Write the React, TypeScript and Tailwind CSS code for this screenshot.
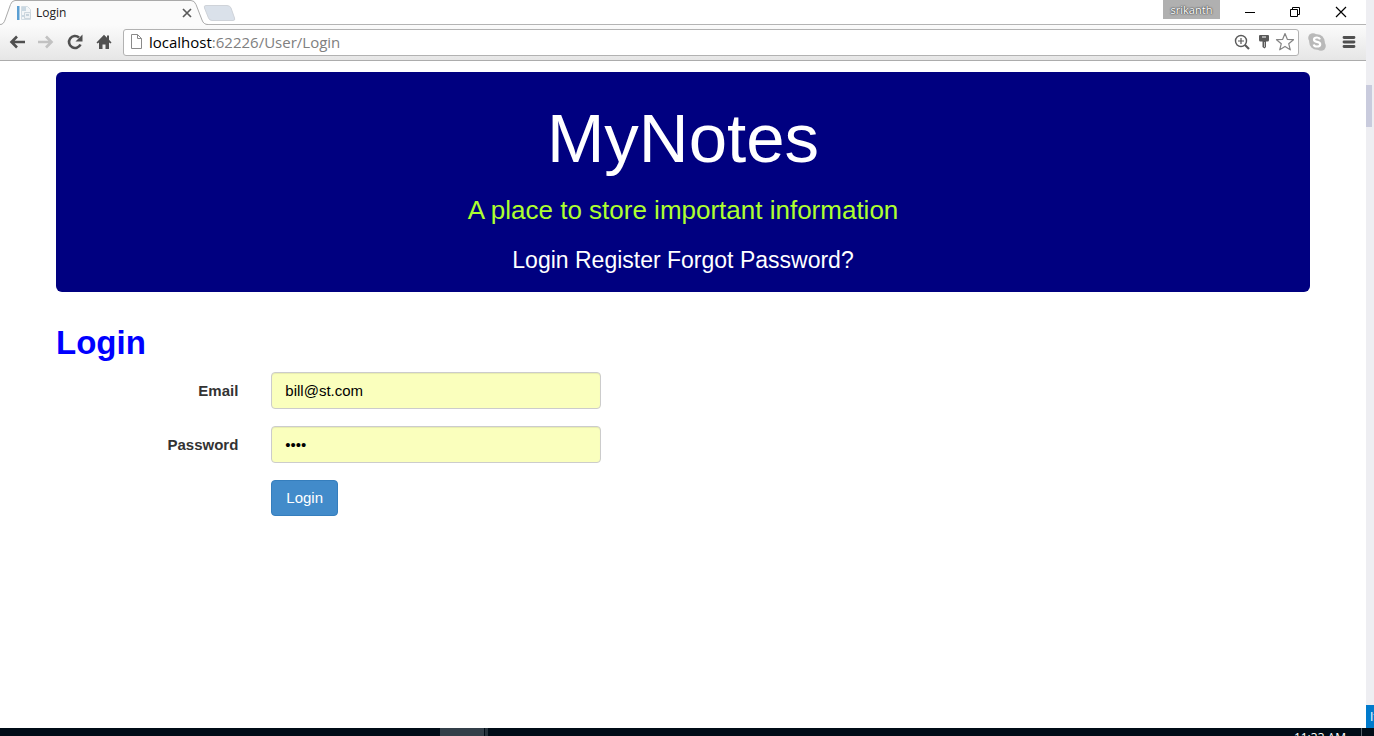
import { useState } from "react";
import type { ReactNode } from "react";

interface IconButtonProps {
  label: string;
  className?: string;
  children: ReactNode;
}

function IconButton({ label, className = "", children }: IconButtonProps) {
  return (
    <button
      type="button"
      aria-label={label}
      className={`flex shrink-0 items-center justify-center ${className}`}
    >
      {children}
    </button>
  );
}

function TabStrip() {
  return (
    <div className="flex h-6 justify-between bg-white font-['Open_Sans',sans-serif]">
      <div className="flex">
        <div className="relative z-10 h-[25px] w-[208px]">
          {/* Tab outline */}
          <svg
            className="absolute inset-0"
            width="208"
            height="25"
            viewBox="0 0 208 25"
            aria-hidden="true"
          >
            <path
              d="M0 24.5C3 24.5 4 22.5 5 20L10.5 4.500Q12 .5 15 .5H191Q194.500 .5 196 4.500L202 20Q203.500 24.500 208 24.500V25H0Z"
              fill="#fbfbfb"
            />
            <path
              d="M0 24.500C3 24.500 4 22.500 5 20L10.500 4.500Q12 .5 15 .5H191Q194.500 .5 196 4.500L202 20Q203.500 24.500 208 24.500"
              fill="none"
              stroke="#aaaaaa"
            />
          </svg>
          <div className="relative flex h-[25px] items-center pr-[11px] pl-4">
            <svg width="16" height="16" viewBox="0 0 16 16" aria-hidden="true">
              <rect x="1" y="1" width="2.500" height="14" fill="#5b9fd3" />
              <path d="M5.500 1.500h6l3 3v10h-9z" fill="#f3f6f8" stroke="#d3dde4" />
              <path d="M6 3h4M6 5h4M6 11h3" stroke="#9fb9cc" />
              <path d="M8.500 7.500h6v6h-6z" fill="#eef2f5" stroke="#ccd6dd" />
              <path d="M10 10h3" stroke="#9fb4c3" />
            </svg>
            <span className="ml-1 flex-1 text-xs text-[#222222]">Login</span>
            <IconButton label="Close tab" className="size-5">
              <svg width="10" height="10" viewBox="0 0 10 10" stroke="#5a5a5a" strokeWidth="1.700">
                <path d="M1 1l8 8M9 1l-8 8" />
              </svg>
            </IconButton>
          </div>
        </div>
        <IconButton label="New tab" className="-ml-1.5">
          <svg width="34" height="24" viewBox="0 0 34 24">
            <path
              d="M4 5.500H25Q28 5.500 29 8L32.500 18Q33.500 20.500 31 20.500H10Q7.500 20.500 6.500 18L2.500 8Q1.500 5.500 4 5.500Z"
              fill="#dae1ea"
              stroke="#cfd3d9"
            />
          </svg>
        </IconButton>
      </div>

      <div className="flex items-start pr-0.5">
        <button
          type="button"
          className="mr-[7px] h-[19px] w-[57px] bg-[#b0b0b0] text-[11px] leading-[18px] text-white [text-shadow:0_0_1px_#333333,0_0_2px_#333333]"
        >
          srikanth
        </button>
        <IconButton label="Minimize" className="h-6 w-[46px]">
          <svg width="12" height="12" viewBox="0 0 12 12" stroke="#000000">
            <path d="M1 6.500h10" />
          </svg>
        </IconButton>
        <IconButton label="Restore" className="h-6 w-11">
          <svg width="12" height="12" viewBox="0 0 12 12" fill="none" stroke="#000000">
            <path d="M1.500 3.500h7v7h-7zM3.500 3.500v-2h7v7h-2" />
          </svg>
        </IconButton>
        <IconButton label="Close" className="h-6 w-[47px]">
          <svg width="12" height="12" viewBox="0 0 12 12" stroke="#000000" strokeWidth="1.200">
            <path d="M1 1l10 10M11 1L1 11" />
          </svg>
        </IconButton>
      </div>
    </div>
  );
}

function AddressBar() {
  return (
    <div className="ml-[5px] flex h-[27px] flex-1 items-center rounded-[3px] border border-[#b2b2b2] bg-white pr-[3px] pb-px pl-1.5">
      <svg width="13" height="17" viewBox="0 0 13 17" fill="none" stroke="#8a8a8a" aria-hidden="true">
        <path d="M1.500 1.500h6l4 4v10h-10z" />
        <path d="M7.500 1.500v4h4" />
      </svg>
      <div className="ml-1.5 flex-1 font-['Open_Sans',sans-serif] text-[15px] leading-5 text-[#808080]">
        <span className="text-black">localhost</span>:62226/User/Login
      </div>
      <IconButton label="Zoom" className="w-[22px]">
        <svg width="18" height="18" viewBox="0 0 18 18" fill="none" stroke="#5a5a5a" strokeWidth="1.400">
          <circle cx="8" cy="8" r="5.500" />
          <path d="M5 8h6M8 5v6" strokeWidth="1.200" />
          <path d="M12 12l4 4" strokeWidth="2.200" />
        </svg>
      </IconButton>
      <IconButton label="Saved password" className="w-[21px]">
        <svg width="12" height="16" viewBox="0 0 12 16" fill="#5a5a5a">
          <path d="M2 1h8q1 0 1 1v4q0 1.500-1.500 1.500H8V13l-1.500 1.500L4.500 13V7.500h-2Q1 7.500 1 6V2q0-1 1-1z" />
          <path d="M4 3h4" stroke="#ffffff" />
          <path d="M6.500 8v5" stroke="#bbbbbb" />
        </svg>
      </IconButton>
      <IconButton label="Bookmark this page" className="w-[21px]">
        <svg width="20" height="20" viewBox="0 0 20 20" fill="#ffffff" stroke="#858585" strokeWidth="1.200" strokeLinejoin="round">
          <path d="M10 1.500l2.300 5.800 6.200.4-4.800 4 1.600 6.100-5.300-3.400-5.300 3.400 1.600-6.100-4.800-4 6.200-.4z" />
        </svg>
      </IconButton>
    </div>
  );
}

function Toolbar() {
  return (
    <div className="flex h-[37px] items-center border-t border-b border-t-[#b4b4b4] border-b-[#acacac] bg-linear-to-b from-[#fbfbfb] to-[#e6e6e6] pb-px pl-0.5">
      <IconButton label="Back" className="w-[29px]">
        <svg width="18" height="16" viewBox="0 0 18 16" fill="none" stroke="#505050" strokeWidth="2.600">
          <path d="M9 2.500L3.500 8l5.500 5.500M3 8h14" />
        </svg>
      </IconButton>
      <IconButton label="Forward" className="w-[29px]">
        <svg width="18" height="16" viewBox="0 0 18 16" fill="none" stroke="#c2c2c2" strokeWidth="2.600">
          <path d="M9 2.500l5.500 5.500-5.500 5.500M15 8H1" />
        </svg>
      </IconButton>
      <IconButton label="Reload" className="w-[29px]">
        <svg width="18" height="18" viewBox="0 0 18 18" fill="none" stroke="#505050" strokeWidth="2.600">
          <path d="M14.500 11.500A6 6 0 1 1 13 4.500" />
          <path d="M16.500 1.500v7h-7z" fill="#505050" stroke="none" />
        </svg>
      </IconButton>
      <IconButton label="Home" className="w-[29px]">
        <svg width="16" height="16" viewBox="0 0 16 16" fill="#505050">
          <path d="M8 .8L11 3.800V1.500h2V5.800l2.500 2.700-1 1-1.500-1V15H9.500v-4.500h-3V15H3V8.500l-1.500 1-1-1z" />
        </svg>
      </IconButton>
      <AddressBar />
      <IconButton label="Skype" className="ml-2 w-5">
        <svg width="20" height="20" viewBox="0 0 20 20">
          <circle cx="10" cy="10" r="7.800" fill="#b9b9b9" />
          <circle cx="6" cy="6" r="4.800" fill="#b9b9b9" />
          <circle cx="14" cy="14" r="4.800" fill="#b9b9b9" />
          <path
            d="M13 7.300C12.500 5.900 11.300 5.500 10 5.500 8.300 5.500 7 6.300 7 7.700 7 10.500 13.200 9.200 13.200 12.200 13.200 13.700 11.800 14.500 10 14.500 8.300 14.500 7 13.800 6.700 12.400"
            fill="none"
            stroke="#ffffff"
            strokeWidth="2.200"
          />
        </svg>
      </IconButton>
      <IconButton label="Menu" className="mr-[9px] ml-3.5 w-4">
        <svg width="14" height="14" viewBox="0 0 14 14" stroke="#505050" strokeWidth="2.800" strokeLinecap="round">
          <path d="M2 2.500h10M2 7h10M2 11.500h10" />
        </svg>
      </IconButton>
    </div>
  );
}

function Banner() {
  return (
    <header className="rounded-md bg-[#000080] pt-7 pb-[15px] text-center">
      <h1 className="text-[69px] leading-[78px] text-white">MyNotes</h1>
      <p className="mt-[17px] text-[26px] leading-[30px] text-[#adff2f]">
        A place to store important information
      </p>
      <nav className="mt-[18px] text-[23px] leading-[34px] text-white">
        <a href="#login">Login</a> <a href="#register">Register</a>{" "}
        <a href="#forgot">Forgot Password?</a>
      </nav>
    </header>
  );
}

interface FieldProps {
  id: string;
  label: string;
  type: string;
  value: string;
  onChange: (value: string) => void;
}

function Field({ id, label, type, value, onChange }: FieldProps) {
  return (
    <div className="-mx-4 mb-[17px] flex items-center">
      <label htmlFor={id} className="w-1/6 pt-0.5 pr-4 text-right font-bold text-[#333333]">
        {label}
      </label>
      <div className="flex-1 px-[17px]">
        <input
          id={id}
          type={type}
          value={value}
          onChange={(e) => onChange(e.target.value)}
          className="block h-[37px] w-[330px] rounded-[4px] border border-[#cccccc] bg-[#faffbd] px-[13px] text-black shadow-[inset_0_1px_1px_rgba(0,0,0,0.075)]"
        />
      </div>
    </div>
  );
}

function LoginForm() {
  const [email, setEmail] = useState("bill@st.com");
  const [password, setPassword] = useState("bill");

  return (
    <form onSubmit={(e) => e.preventDefault()} className="text-[15px]">
      <h2 className="mt-[33px] mb-[11px] text-[33px] leading-9 font-bold text-[#0000ff]">Login</h2>
      <Field id="email" label="Email" type="email" value={email} onChange={setEmail} />
      <Field id="password" label="Password" type="password" value={password} onChange={setPassword} />
      <div className="-mx-4">
        <div className="ml-[16.6667%] px-[17px]">
          <button
            type="submit"
            className="h-9 rounded-[4px] border border-[#357ebd] bg-[#428bca] px-3.5 text-white"
          >
            Login
          </button>
        </div>
      </div>
    </form>
  );
}

export default function App() {
  return (
    <div className="flex min-h-screen flex-col bg-white font-['Liberation_Sans',Arial,sans-serif]">
      <div className="flex flex-1">
        <div className="flex min-w-0 flex-1 flex-col">
          <TabStrip />
          <Toolbar />
          <main className="px-14 pt-[11px]">
            <Banner />
            <LoginForm />
          </main>
        </div>

        {/* Edge of the window behind */}
        <div className="flex w-2 flex-col justify-between overflow-hidden bg-[#eeeef2]">
          <div className="mt-[85px] h-[42px] w-1.5 bg-[#c9cbdd]" />
          <div className="h-[23px] overflow-hidden bg-[#007acc] pl-1 font-['Open_Sans',sans-serif] text-xs leading-[23px] whitespace-nowrap text-white">
            It
          </div>
        </div>
      </div>

      {/* Taskbar */}
      <footer className="flex h-2 overflow-hidden bg-[#000c17]">
        <div className="ml-[440px] w-11 bg-[#333f49]" />
        <div className="ml-px w-[3px] bg-[#26323c]" />
        <div className="ml-auto pt-1 pr-[15px] font-['Open_Sans',sans-serif] text-xs leading-3 text-white">
          11:33 AM
        </div>
        <div className="mr-3 w-px bg-[#58626b]" />
      </footer>
    </div>
  );
}
